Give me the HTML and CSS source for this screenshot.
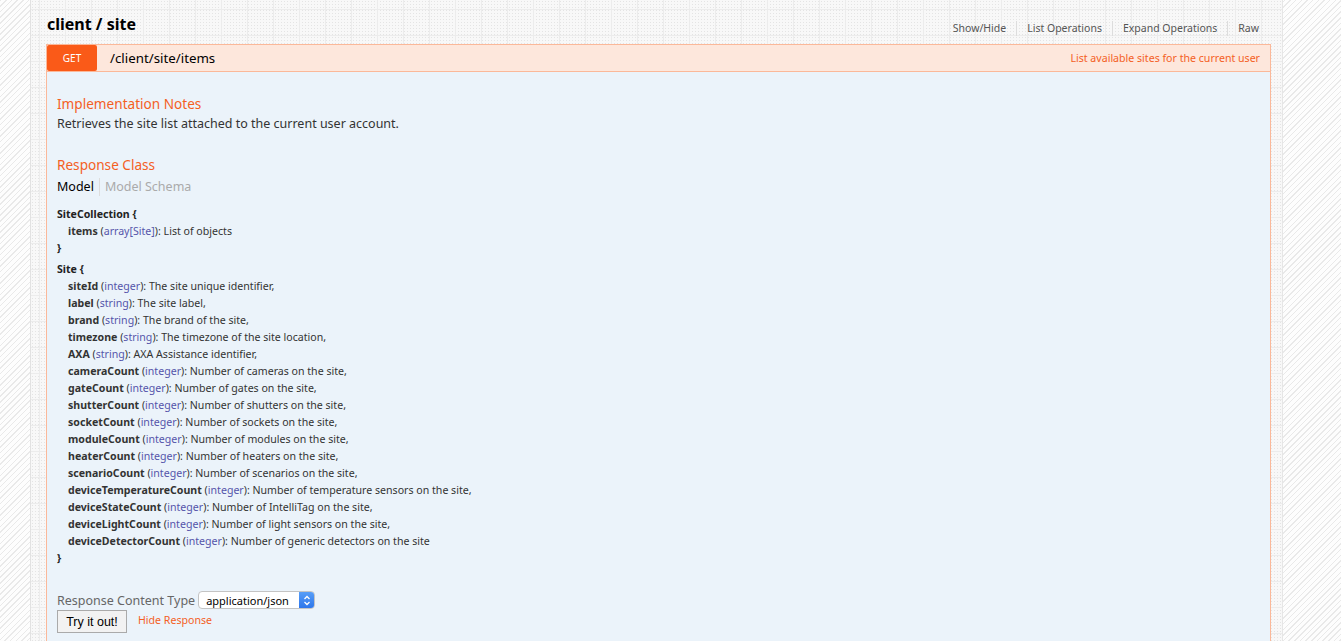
FILE: index.html
```html
<!DOCTYPE html>
<html>
<head>
	<meta charset="utf-8">
	<title>client / site</title>
	<link rel="stylesheet" href="styles.css">
</head>
<body>
	<div class="container">
		<div class="resource-head">
			<h2>client / site</h2>
			<ul class="options">
				<li>Show/Hide</li>
				<li>List Operations</li>
				<li>Expand Operations</li>
				<li>Raw</li>
			</ul>
		</div>

		<div class="operation">
			<div class="op-heading">
				<span class="method">GET</span>
				<span class="path">/client/site/items</span>
				<span class="summary">List available sites for the current user</span>
			</div>
			<div class="op-content">
				<h4>Implementation Notes</h4>
				<p class="notes">Retrieves the site list attached to the current user account.</p>

				<h4 class="response-title">Response Class</h4>
				<div class="tabs">
					<span class="active">Model</span>
					<span>Model Schema</span>
				</div>

				<div class="model first">
					<div class="line strong">SiteCollection {</div>
					<div class="line prop"><b>items</b> (<span class="type">array[Site]</span>): List of objects</div>
					<div class="line strong">}</div>
				</div>
				<div class="model">
					<div class="line strong">Site {</div>
					<div class="line prop"><b>siteId</b> (<span class="type">integer</span>): The site unique identifier,</div>
					<div class="line prop"><b>label</b> (<span class="type">string</span>): The site label,</div>
					<div class="line prop"><b>brand</b> (<span class="type">string</span>): The brand of the site,</div>
					<div class="line prop"><b>timezone</b> (<span class="type">string</span>): The timezone of the site location,</div>
					<div class="line prop"><b>AXA</b> (<span class="type">string</span>): AXA Assistance identifier,</div>
					<div class="line prop"><b>cameraCount</b> (<span class="type">integer</span>): Number of cameras on the site,</div>
					<div class="line prop"><b>gateCount</b> (<span class="type">integer</span>): Number of gates on the site,</div>
					<div class="line prop"><b>shutterCount</b> (<span class="type">integer</span>): Number of shutters on the site,</div>
					<div class="line prop"><b>socketCount</b> (<span class="type">integer</span>): Number of sockets on the site,</div>
					<div class="line prop"><b>moduleCount</b> (<span class="type">integer</span>): Number of modules on the site,</div>
					<div class="line prop"><b>heaterCount</b> (<span class="type">integer</span>): Number of heaters on the site,</div>
					<div class="line prop"><b>scenarioCount</b> (<span class="type">integer</span>): Number of scenarios on the site,</div>
					<div class="line prop"><b>deviceTemperatureCount</b> (<span class="type">integer</span>): Number of temperature sensors on the site,</div>
					<div class="line prop"><b>deviceStateCount</b> (<span class="type">integer</span>): Number of IntelliTag on the site,</div>
					<div class="line prop"><b>deviceLightCount</b> (<span class="type">integer</span>): Number of light sensors on the site,</div>
					<div class="line prop"><b>deviceDetectorCount</b> (<span class="type">integer</span>): Number of generic detectors on the site</div>
					<div class="line strong">}</div>
				</div>

				<div class="content-type">
					<label>Response Content Type</label>
					<div class="select">
						<span>application/json</span>
						<span class="select-arrow">
							<svg width="8" height="11" viewBox="0 0 8 11"><path d="M1.5 4 L4 1.5 L6.5 4 M1.5 7 L4 9.5 L6.5 7" fill="none" stroke="#fff" stroke-width="1.3"/></svg>
						</span>
					</div>
				</div>
				<div class="submit">
					<button>Try it out!</button>
					<span class="hide-response">Hide Response</span>
				</div>
			</div>
		</div>
	</div>
</body>
</html>
```

FILE: styles.css
```css
*{
	margin: 0;
	padding: 0;
	box-sizing: border-box;
}
body{
	font-family: "Noto Sans", "Open Sans", sans-serif;
	color: #333;
	height: 641px;
	overflow: hidden;
	background-color: #fdfdfd;
	background-image: repeating-linear-gradient(135deg, #e9e9e9 0, #e9e9e9 1px, transparent 1px, transparent 4px);
}
.container{
	margin-left: 30px;
	width: 1253px;
	height: 641px;
	padding: 0 12px 0 15px;
	border-left: 1px solid #e2e2e2;
	border-right: 1px solid #e6e6e6;
	background-color: #f8f8f8;
	background-image:
		linear-gradient(90deg, #ececec 1px, transparent 1px),
		linear-gradient(#ececec 1px, transparent 1px),
		radial-gradient(#e4e4e4 0.6px, transparent 0.7px);
	background-size: 26px 26px, 26px 26px, 3px 3px;
	background-position: 8px 9px, 8px 9px, 0 0;
}
.resource-head{
	display: flex;
	align-items: flex-end;
	justify-content: space-between;
	height: 44px;
	padding-bottom: 8px;
}
.resource-head h2{
	font-size: 16px;
	font-weight: bold;
	color: #000;
	margin: 0 0 1px 1px;
}
.options{
	list-style: none;
	display: flex;
	font-size: 10.5px;
	color: #555;
	padding-right: 11px;
	margin-bottom: 0;
}
.options li{
	padding: 0 10px;
	border-left: 1px solid #ddd;
	line-height: 15px;
}
.options li:first-child{
	border-left: none;
}
.options li:last-child{
	padding-right: 0;
}
.operation{
	width: 1225px;
}
.op-heading{
	display: flex;
	align-items: center;
	height: 28px;
	background: #fde7dc;
	border: 1px solid #fbb899;
}
.method{
	width: 50px;
	height: 26px;
	background: #fa5a18;
	color: #fff;
	font-size: 10px;
	text-align: center;
	line-height: 26px;
	border-radius: 2px;
}
.path{
	margin-left: 13px;
	font-size: 13.3px;
	color: #000;
}
.summary{
	margin-left: auto;
	padding-right: 10px;
	font-size: 10.6px;
	color: #f4601f;
}
.op-content{
	background: #ebf3fa;
	border-left: 1px solid #fbb899;
	border-right: 1px solid #fbb899;
	padding: 22px 10px 20px;
	height: 570px;
}
h4{
	font-size: 13.6px;
	font-weight: normal;
	color: #f4601f;
	line-height: 20px;
}
.notes{
	font-size: 12.5px;
	line-height: 20px;
	color: #333;
}
.response-title{
	margin-top: 21px;
}
.tabs{
	display: flex;
	font-size: 12.5px;
	margin-top: 3px;
	line-height: 18px;
}
.tabs span{
	color: #aaa;
	padding-left: 5px;
}
.tabs .active{
	color: #000;
	padding: 0 5px 0 0;
	border-right: 1px solid #ddd;
}
.model{
	font-size: 10.6px;
	margin-top: 4px;
}
.model.first{
	margin-top: 10px;
}
.line{
	line-height: 17px;
}
.strong{
	font-weight: bold;
	color: #222;
}
.prop{
	padding-left: 11px;
}
.prop b{
	color: #333;
}
.type{
	color: #55a;
}
.content-type{
	display: flex;
	align-items: center;
	margin-top: 24px;
	font-size: 12.5px;
	color: #666;
}
.content-type label{
	margin-right: 3px;
}
.select{
	display: flex;
	align-items: center;
	width: 117px;
	height: 18px;
	background: #fff;
	border: 1px solid #c4c4c4;
	border-radius: 4px;
	font-size: 11px;
	color: #000;
	overflow: hidden;
}
.select span:first-child{
	padding-left: 7px;
	flex: 1;
}
.select-arrow{
	width: 15px;
	height: 18px;
	background: linear-gradient(#5aa0f8, #2b74ea);
	display: flex;
	align-items: center;
	justify-content: center;
}
.submit{
	display: flex;
	align-items: center;
	margin-top: 1px;
}
button{
	font-family: "Liberation Sans", sans-serif;
	font-size: 12.5px;
	width: 70px;
	height: 23px;
	background: #f2f2f2;
	border: 1px solid #aaa;
	color: #000;
}
.hide-response{
	font-size: 10.6px;
	color: #f4601f;
	margin-left: 11px;
	margin-top: -4px;
}
```
